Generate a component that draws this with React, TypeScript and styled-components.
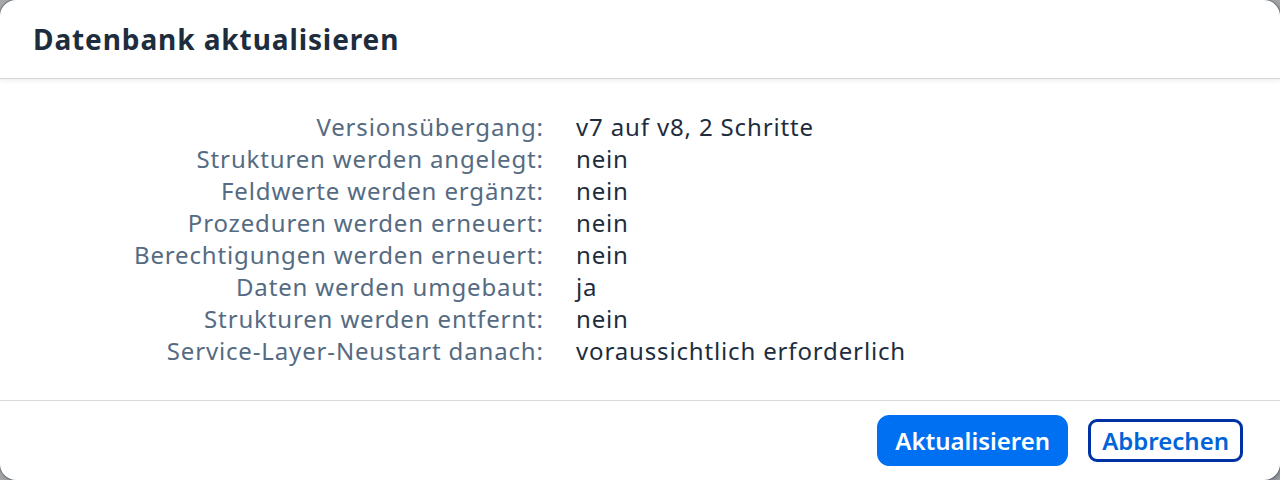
import React from "react";
import styled, { createGlobalStyle } from "styled-components";

const Global = createGlobalStyle`
  html, body { margin: 0; padding: 0; }
  body {
    background: #a8a8a8;
    font-family: "Noto Sans", "Open Sans", sans-serif;
    width: 1280px;
    height: 480px;
    overflow: hidden;
  }
`;

const Dialog = styled.div`
  box-sizing: border-box;
  width: 1280px;
  height: 480px;
  background: #ffffff;
  border-radius: 16px;
  box-shadow: 0 0 0 1px rgba(34, 53, 72, 0.35), 2px 2px 6px rgba(34, 53, 72, 0.4);
  display: flex;
  flex-direction: column;
  overflow: hidden;
`;

const Header = styled.header`
  box-sizing: border-box;
  height: 79px;
  padding: 0 33px;
  display: flex;
  align-items: center;
  border-bottom: 1px solid #d5d5d5;
  box-shadow: 0 2px 4px rgba(34, 53, 72, 0.08);
  position: relative;
  z-index: 1;
`;

const Title = styled.h1`
  margin: 0;
  font-size: 28px;
  font-weight: 700;
  color: #1d2d3e;
  letter-spacing: 0.9px;
`;

const Body = styled.main`
  flex: 1;
  box-sizing: border-box;
  padding: 32px 33px 0;
`;

const Grid = styled.dl`
  margin: 0;
  display: grid;
  grid-template-columns: 510px auto;
  column-gap: 33px;
  font-size: 24px;
  line-height: 32px;
  letter-spacing: 0.85px;
`;

const Label = styled.dt`
  margin: 0;
  text-align: right;
  color: #556b82;
  white-space: nowrap;
  margin-right: -0.85px;
`;

const Value = styled.dd`
  margin: 0;
  color: #1d2d3e;
  white-space: nowrap;
`;

const Footer = styled.footer`
  box-sizing: border-box;
  height: 80px;
  border-top: 1px solid #d9d9d9;
  padding: 0 33px;
  display: flex;
  align-items: center;
  justify-content: flex-end;
  gap: 16px;
`;

const Button = styled.button<{ $primary?: boolean; $focused?: boolean }>`
  position: relative;
  box-sizing: border-box;
  height: 51px;
  padding: 0 17px;
  border-radius: 12px;
  font-family: inherit;
  font-size: 24px;
  font-weight: 600;
  cursor: pointer;
  border: 1px solid ${(p) => (p.$primary ? "#0070f2" : "transparent")};
  background: ${(p) => (p.$primary ? "#0070f2" : "#ffffff")};
  color: ${(p) => (p.$primary ? "#ffffff" : "#0064d9")};
  outline: none;

  &::after {
    content: "";
    display: ${(p) => (p.$focused ? "block" : "none")};
    position: absolute;
    inset: 3px;
    border: 3px solid #0032a5;
    border-radius: 9px;
    pointer-events: none;
  }
`;

const rows: [string, string][] = [
  ["Versionsübergang:", "v7 auf v8, 2 Schritte"],
  ["Strukturen werden angelegt:", "nein"],
  ["Feldwerte werden ergänzt:", "nein"],
  ["Prozeduren werden erneuert:", "nein"],
  ["Berechtigungen werden erneuert:", "nein"],
  ["Daten werden umgebaut:", "ja"],
  ["Strukturen werden entfernt:", "nein"],
  ["Service-Layer-Neustart danach:", "voraussichtlich erforderlich"],
];

export default function App() {
  return (
    <>
      <Global />
      <Dialog role="dialog" aria-labelledby="dlg-title">
        <Header>
          <Title id="dlg-title">Datenbank aktualisieren</Title>
        </Header>
        <Body>
          <Grid>
            {rows.map(([k, v]) => (
              <React.Fragment key={k}>
                <Label>{k}</Label>
                <Value>{v}</Value>
              </React.Fragment>
            ))}
          </Grid>
        </Body>
        <Footer>
          <Button $primary>Aktualisieren</Button>
          <Button $focused>Abbrechen</Button>
        </Footer>
      </Dialog>
    </>
  );
}
